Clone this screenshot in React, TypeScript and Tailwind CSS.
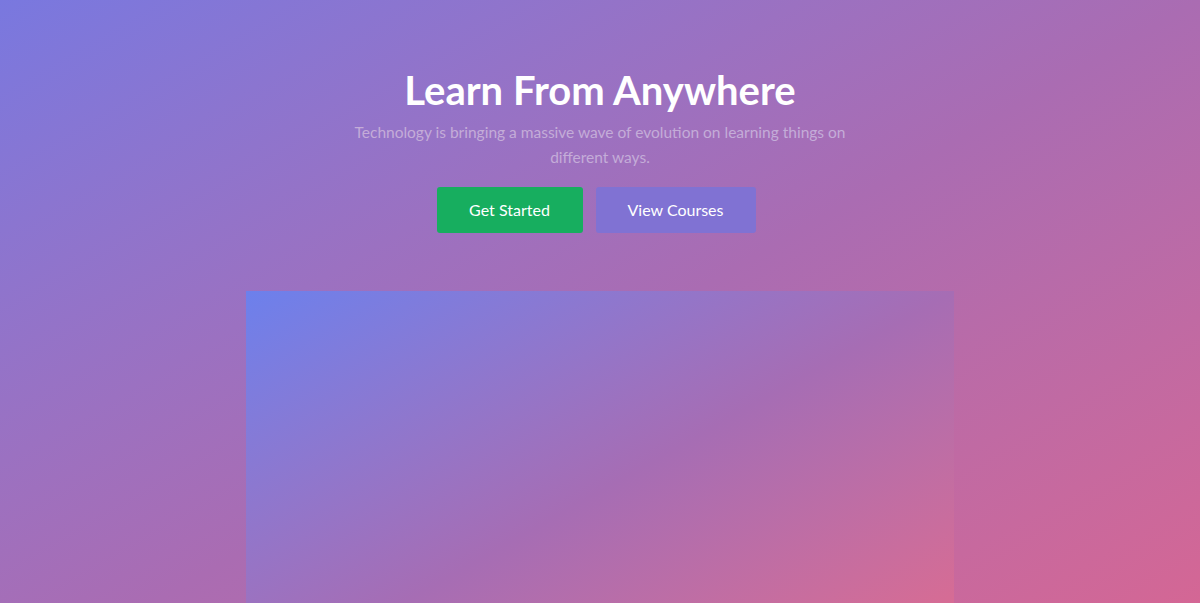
const App = () => {
  return (
    <div className="min-h-screen w-full overflow-hidden bg-gradient-to-br from-[#7978df] via-[#aa6cb2] to-[#da6590] font-['Lato',sans-serif]">
      <section className="flex flex-col items-center pt-[66px]">
        <h1 className="text-[40px] font-bold leading-[48px] text-white">Learn From Anywhere</h1>
        <p className="mt-[6px] max-w-[500px] text-center text-[15.5px] leading-[25px] text-[#c4acd8]">
          Technology is bringing a massive wave of evolution on learning things on different ways.
        </p>
        <div className="mt-[17px] flex gap-[13px] pr-[8px]">
          <button className="h-[46px] w-[146px] rounded-[3px] bg-[#17ae5f] text-[16px] text-white">Get Started</button>
          <button className="h-[46px] w-[160px] rounded-[3px] bg-[#8072d3] text-[16px] text-white">View Courses</button>
        </div>
        <div className="mt-[58px] h-[400px] w-[708px] bg-gradient-to-br from-[#6c80ec] via-[#a66db4] to-[#e46a8a]" />
      </section>
    </div>
  );
};

export default App;
